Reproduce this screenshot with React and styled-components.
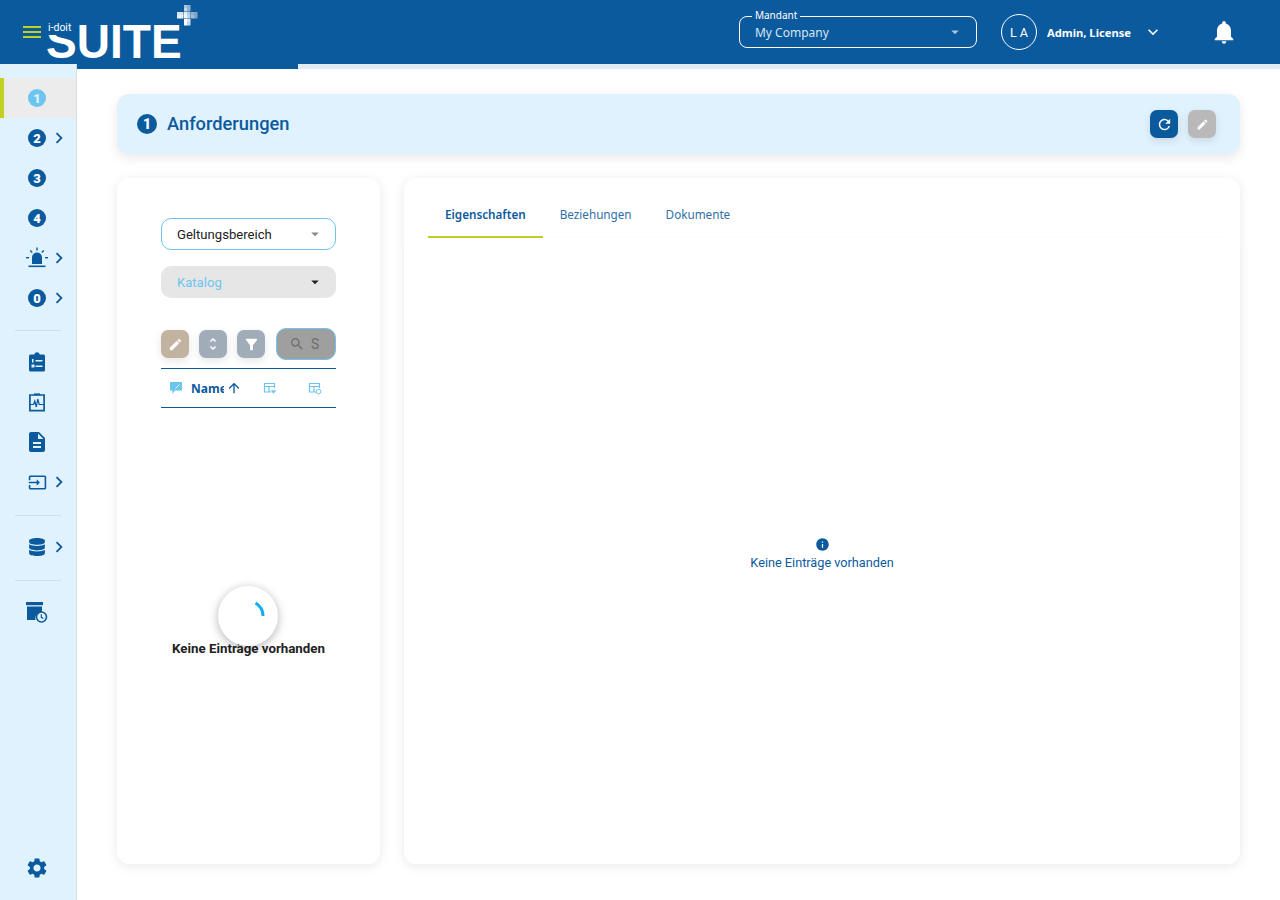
import React from "react";
import styled, { createGlobalStyle } from "styled-components";
import {
  MdMenu,
  MdKeyboardArrowRight,
  MdKeyboardArrowDown,
  MdNotifications,
  MdRefresh,
  MdEdit,
  MdUnfoldMore,
  MdFilterAlt,
  MdSearch,
  MdInfo,
  MdSettings,
  MdDescription,
  MdInput,
  MdArrowUpward,
  MdArrowDropDown,
} from "react-icons/md";
import { FaDatabase } from "react-icons/fa";

const BLUE = "#0b5a9e";
const LIGHT = "#e0f2fe";
const LIME = "#c0d025";
const SKY = "#6cc5ef";
const TITLE_FONT = `"Noto Sans", "Open Sans", sans-serif`;
const BODY_FONT = `Roboto, "Liberation Sans", sans-serif`;

const GlobalStyle = createGlobalStyle`
  html, body {
    margin: 0;
    padding: 0;
    background: #fff;
    font-family: ${BODY_FONT};
  }
  * { box-sizing: border-box; }
`;

const Page = styled.div`
  width: 100%;
  height: 100vh;
  display: flex;
  flex-direction: column;
  overflow: hidden;
`;

const Header = styled.header`
  height: 64px;
  flex: none;
  background: ${BLUE};
  display: flex;
  align-items: center;
  color: #fff;
`;

const MenuButton = styled.div`
  width: 48px;
  display: flex;
  justify-content: flex-end;
  padding-right: 4px;
  color: ${LIME};
  font-size: 24px;
  line-height: 0;
  margin-top: -1px;
`;

const Logo = styled.div`
  position: relative;
  width: 150px;
  height: 64px;
`;

const LogoBig = styled.span`
  position: absolute;
  left: -2px;
  top: 13px;
  font: 700 49px/56px "Liberation Sans", sans-serif;
  color: #fff;
  transform: scaleX(0.94);
  transform-origin: left center;
`;

/* sits over the top of the S, like the real logo */
const LogoSmall = styled.span`
  position: absolute;
  left: 0;
  top: 21px;
  width: 30px;
  height: 14px;
  background: ${BLUE};
  font: 400 10.5px/14px ${BODY_FONT};
  color: #fff;
`;

const LogoPlus = styled.svg`
  position: absolute;
  left: 129px;
  top: 5px;
`;

const HeaderRight = styled.div`
  margin-left: auto;
  display: flex;
  align-items: center;
`;

const Fieldset = styled.div`
  position: relative;
  width: 238px;
  height: 32px;
  border: 1px solid #fff;
  border-radius: 8px;
  display: flex;
  align-items: center;
  justify-content: space-between;
  padding: 0 12px 0 15px;
  font: 400 12px ${TITLE_FONT};
  color: #d5e6f3;
`;

const FieldsetLabel = styled.span`
  position: absolute;
  left: 12px;
  top: -8px;
  padding: 0 3px;
  background: ${BLUE};
  font: 400 10px/13px ${TITLE_FONT};
  color: #fff;
`;

const Caret = styled.span`
  display: flex;
  font-size: 18px;
  color: ${(p) => p.$color || "#888"};
`;

const Avatar = styled.div`
  margin-left: 24px;
  width: 36px;
  height: 36px;
  border: 1px solid #fff;
  border-radius: 50%;
  display: flex;
  align-items: center;
  justify-content: center;
  font: 400 12.5px ${BODY_FONT};
`;

const UserName = styled.span`
  margin-left: 10px;
  font: 700 11.2px ${TITLE_FONT};
`;

const UserCaret = styled.span`
  display: flex;
  margin-left: 12px;
  font-size: 20px;
`;

const BellWrap = styled.span`
  display: flex;
  margin: 0 42px 0 47px;
  font-size: 28px;
`;

const Body = styled.div`
  flex: 1;
  min-height: 0;
  display: flex;
`;

const Sidebar = styled.nav`
  width: 77px;
  flex: none;
  background: ${LIGHT};
  border-right: 1px solid #d5dde3;
  display: flex;
  flex-direction: column;
  padding: 14px 0 12px;
`;

const NavItem = styled.div`
  height: 40px;
  flex: none;
  display: flex;
  align-items: center;
  background: ${(p) => (p.$active ? "#ececec" : "transparent")};
  border-left: ${(p) => (p.$active ? `4px solid ${LIME}` : "none")};
  color: ${BLUE};
  padding-left: ${(p) => (p.$active ? "24px" : "28px")};
  margin-top: ${(p) => (p.$bottom ? "auto" : "0")};
`;

const IconSlot = styled.span`
  width: 18px;
  height: 18px;
  flex: none;
  display: flex;
  align-items: center;
  justify-content: center;
  font-size: ${(p) => p.$size || 22}px;

  svg {
    flex: none;
  }
`;

const NumberBadge = styled.span`
  width: 18px;
  height: 18px;
  flex: none;
  border-radius: 50%;
  background: ${(p) => (p.$active ? SKY : BLUE)};
  color: ${(p) => (p.$active ? "#e0f2fe" : "#fff")};
  display: flex;
  align-items: center;
  justify-content: center;
  font: 900 13px/1 ${BODY_FONT};
`;

const Chevron = styled.span`
  display: flex;
  margin-left: 2px;
  font-size: 22px;
`;

const Divider = styled.div`
  height: 1px;
  flex: none;
  margin: ${(p) => p.$top || 13}px 15px 11px;
  background: #c9e0ef;
`;

const Main = styled.main`
  flex: 1;
  min-width: 0;
  display: flex;
  flex-direction: column;
`;

const Progress = styled.div`
  height: 5px;
  flex: none;
  background: #e0ecf5;
`;

const ProgressFill = styled.div`
  height: 100%;
  background: ${BLUE};
`;

const Content = styled.div`
  flex: 1;
  min-height: 0;
  padding: 25px 40px 36px;
  display: flex;
  flex-direction: column;
  gap: 24px;
`;

const TitleCard = styled.section`
  height: 60px;
  flex: none;
  background: ${LIGHT};
  border-radius: 12px;
  box-shadow: 0 4px 12px rgba(0, 0, 0, 0.09);
  display: flex;
  align-items: center;
  padding: 0 24px 0 20px;
`;

const TitleBadge = styled(NumberBadge)`
  width: 20px;
  height: 20px;
  font-size: 14px;
`;

const Title = styled.h1`
  margin: -2px 0 0 10px;
  font: 500 18.3px ${BODY_FONT};
  color: ${BLUE};
`;

const TitleActions = styled.div`
  margin-left: auto;
  display: flex;
  gap: 10px;
`;

const SquareButton = styled.button`
  width: 28px;
  height: 28px;
  padding: 0;
  border: none;
  border-radius: 7px;
  background: ${(p) => p.$bg};
  color: #fff;
  display: flex;
  align-items: center;
  justify-content: center;
  font-size: ${(p) => p.$size || 16}px;
  box-shadow: 0 3px 8px rgba(0, 0, 0, 0.1);
`;

const Panels = styled.div`
  flex: 1;
  min-height: 0;
  display: flex;
  gap: 24px;
`;

const LeftPanel = styled.section`
  position: relative;
  width: 263px;
  flex: none;
  background: #fff;
  border-radius: 12px;
  box-shadow: 0 2px 12px rgba(0, 0, 0, 0.09);
  padding: 40px 44px 0;
  display: flex;
  flex-direction: column;
`;

const SelectBox = styled.div`
  height: 32px;
  flex: none;
  border-radius: 10px;
  border: ${(p) => (p.$disabled ? "none" : `1px solid ${SKY}`)};
  background: ${(p) => (p.$disabled ? "#e6e6e6" : "#fff")};
  color: ${(p) => (p.$disabled ? SKY : "#222")};
  margin-bottom: 16px;
  padding: ${(p) => (p.$disabled ? "0 12px 0 16px" : "0 11px 0 15px")};
  display: flex;
  align-items: center;
  justify-content: space-between;
  font: 400 13.1px ${BODY_FONT};
`;

const Toolbar = styled.div`
  display: flex;
  align-items: center;
  gap: 10px;
  margin-top: 14px;
  height: 32px;
`;

const SearchBox = styled.div`
  width: 60px;
  height: 32px;
  margin-left: 1px;
  border: 1px solid ${SKY};
  border-radius: 10px;
  background: #9f9f9f;
  display: flex;
  align-items: center;
  padding-left: 12px;
  gap: 6px;
  color: #6e6e6e;
  font: 400 14px ${BODY_FONT};
  overflow: hidden;

  svg {
    flex: none;
  }
`;

const TableHead = styled.div`
  height: 40px;
  margin-top: 8px;
  border-top: 1px solid ${BLUE};
  border-bottom: 1px solid ${BLUE};
  display: grid;
  grid-template-columns: 30px 55px 47px 43px;
  align-items: center;
`;

const HeadIcon = styled.span`
  display: flex;
  justify-content: ${(p) => p.$align || "center"};
  color: ${SKY};
  padding-left: ${(p) => p.$pad || 0}px;
`;

const NameCell = styled.div`
  display: flex;
  align-items: center;
  color: ${BLUE};
  font: 700 12px ${TITLE_FONT};
`;

const NameClip = styled.span`
  width: 33px;
  overflow: hidden;
  white-space: nowrap;
`;

const SortArrow = styled.span`
  display: flex;
  margin-left: 2px;
  font-size: 16px;
`;

const LeftEmpty = styled.div`
  margin-top: 233px;
  margin-left: -10px;
  margin-right: -10px;
  text-align: center;
  white-space: nowrap;
  font: 700 13.3px/16px ${BODY_FONT};
  color: #222;
`;

const SpinnerCircle = styled.div`
  position: absolute;
  left: 101px;
  top: 408px;
  width: 60px;
  height: 60px;
  border-radius: 50%;
  background: #fff;
  box-shadow: 0 2px 10px rgba(0, 0, 0, 0.3);
  display: flex;
  align-items: center;
  justify-content: center;
`;

const RightPanel = styled.section`
  flex: 1;
  min-width: 0;
  background: #fff;
  border-radius: 12px;
  box-shadow: 0 2px 12px rgba(0, 0, 0, 0.09);
  display: flex;
  flex-direction: column;
`;

const Tabs = styled.div`
  height: 60px;
  flex: none;
  padding-left: 24px;
  display: flex;
`;

const Tab = styled.div`
  padding: 16px 17px 2px;
  display: flex;
  align-items: center;
  font: ${(p) => (p.$active ? 600 : 400)} 11.7px ${TITLE_FONT};
  color: ${(p) => (p.$active ? BLUE : "#2e6fa8")};
  border-bottom: 2px solid ${(p) => (p.$active ? LIME : "transparent")};
`;

const TabBody = styled.div`
  flex: 1;
  min-height: 0;
  border-radius: 12px;
  padding-top: 6px;
  box-shadow: 0 -1px 2px rgba(0, 0, 0, 0.015);
  display: flex;
  flex-direction: column;
  align-items: center;
  justify-content: center;
  color: ${BLUE};
  font: 400 12.7px/18px ${BODY_FONT};
`;

const InfoIcon = styled.span`
  display: flex;
  font-size: 15px;
  margin-bottom: 2px;
`;

function Plus() {
  const cells = [
    [7, 0, "#a9c3da"],
    [10, 0, "#8fb0cf"],
    [7, 3, "#c5d7e6"],
    [10, 3, "#8fb0cf"],
    [0, 7, "#d7e3ee"],
    [3, 7, "#d7e3ee"],
    [7, 7, "#e8eff5"],
    [10, 7, "#b6cce0"],
    [14, 7, "#8fb0cf"],
    [17, 7, "#7ea4c6"],
    [0, 10, "#e8eff5"],
    [3, 10, "#e8eff5"],
    [7, 10, "#f2f6f9"],
    [10, 10, "#c5d7e6"],
    [14, 10, "#a0bdd6"],
    [17, 10, "#7ea4c6"],
    [7, 14, "#ffffff"],
    [10, 14, "#d7e3ee"],
    [7, 17, "#ffffff"],
    [10, 17, "#c5d7e6"],
  ];
  return (
    <LogoPlus width="21" height="21" viewBox="0 0 21 21">
      {cells.map(([x, y, c]) => (
        <rect key={`${x}-${y}`} x={x} y={y} width="3.5" height="3.5" fill={c} />
      ))}
    </LogoPlus>
  );
}

const SirenIcon = () => (
  <svg width="22" height="22" viewBox="0 0 22 22" fill="currentColor">
    <path d="M6 17v-6.500a5 5 0 0 1 10 0V17z" />
    <rect x="2.500" y="18.500" width="17" height="1.600" />
    <rect x="10.300" y="0.500" width="1.400" height="3" />
    <rect x="0" y="10" width="3" height="1.400" />
    <rect x="19" y="10" width="3" height="1.400" />
    <path d="M3.700 3.900l1-1 2 2-1 1zM18.300 3.900l-1-1-2 2 1 1z" />
  </svg>
);

const ChecklistIcon = () => (
  <svg width="20" height="20" viewBox="0 0 20 20">
    <path
      fill="currentColor"
      d="M3.500 2.500h3.700a2.900 2.900 0 0 1 5.600 0h3.700a1.500 1.500 0 0 1 1.500 1.500v14a1.500 1.500 0 0 1-1.500 1.500h-13A1.500 1.500 0 0 1 2 18V4a1.500 1.500 0 0 1 1.500-1.500z"
    />
    <g fill={LIGHT}>
      <rect x="5" y="7" width="1.500" height="3.500" />
      <rect x="8.500" y="8" width="7" height="1.500" />
      <rect x="4.500" y="12.500" width="3" height="3" />
      <rect x="8.500" y="13.500" width="7" height="1.500" />
    </g>
  </svg>
);

const PulseIcon = () => (
  <svg width="20" height="20" viewBox="0 0 20 20" fill="none" stroke="currentColor">
    <path strokeWidth="1.700" d="M7 3H2.900v15.600h14.200V3H13" />
    <path strokeWidth="2.400" d="M7 2.600h6" />
    <path strokeWidth="1.200" d="M3 12.500h3.500l1.300-3.500 1.500 6 1.500-8 1.400 5.500H17" />
  </svg>
);

const ArchiveClockIcon = () => (
  <svg width="22" height="22" viewBox="0 0 22 22">
    <rect x="0" y="1" width="17" height="3.200" fill="currentColor" />
    <path fill="currentColor" d="M1 5.500h15v6a6 6 0 0 0-6.500 7.500H1z" />
    <circle cx="15.500" cy="16" r="5" fill={LIGHT} stroke="currentColor" strokeWidth="1.600" />
    <path d="M15.300 13.300v3l2.100 1.200" fill="none" stroke="currentColor" strokeWidth="1.200" />
  </svg>
);

const CommentIcon = () => (
  <svg width="14" height="14" viewBox="0 0 14 14">
    <path fill={SKY} d="M1 1h12v8.500H6L3.500 13V9.500H1z" />
    <path stroke="#fff" strokeWidth="0.900" d="M6.500 7.500l4-4" />
  </svg>
);

const TableAddIcon = ({ round }) => (
  <svg width="14" height="14" viewBox="0 0 14 14" fill="none" stroke={SKY}>
    <path strokeWidth="1.200" d="M8 11H1.500V2.500h10V7M1.500 5.500h10M6 5.500V11" />
    {round ? (
      <circle cx="10.500" cy="10.500" r="2.300" strokeWidth="1" />
    ) : (
      <path d="M8 9.500h5l-2.500 3z" fill={SKY} strokeWidth="0.400" />
    )}
  </svg>
);

const SpinnerArc = () => (
  <svg width="36" height="36" viewBox="0 0 36 36" fill="none">
    <path d="M25.500 5A15 15 0 0 1 33 18" stroke="#12aef0" strokeWidth="3" />
  </svg>
);

const Item = ({ children, chevron, active, bottom, size }) => (
  <NavItem $active={active} $bottom={bottom}>
    <IconSlot $size={size}>{children}</IconSlot>
    {chevron && (
      <Chevron>
        <MdKeyboardArrowRight />
      </Chevron>
    )}
  </NavItem>
);

export default function App() {
  return (
    <Page>
      <GlobalStyle />
      <Header>
        <MenuButton>
          <MdMenu />
        </MenuButton>
        <Logo>
          <LogoBig>SUITE</LogoBig>
          <LogoSmall>i-doit</LogoSmall>
          <Plus />
        </Logo>
        <HeaderRight>
          <Fieldset>
            <FieldsetLabel>Mandant</FieldsetLabel>
            My Company
            <Caret $color="#a9c6de">
              <MdArrowDropDown />
            </Caret>
          </Fieldset>
          <Avatar>L A</Avatar>
          <UserName>Admin, License</UserName>
          <UserCaret>
            <MdKeyboardArrowDown />
          </UserCaret>
          <BellWrap>
            <MdNotifications />
          </BellWrap>
        </HeaderRight>
      </Header>
      <Body>
        <Sidebar>
          <Item active>
            <NumberBadge $active>1</NumberBadge>
          </Item>
          <Item chevron>
            <NumberBadge>2</NumberBadge>
          </Item>
          <Item>
            <NumberBadge>3</NumberBadge>
          </Item>
          <Item>
            <NumberBadge>4</NumberBadge>
          </Item>
          <Item chevron>
            <SirenIcon />
          </Item>
          <Item chevron>
            <NumberBadge>0</NumberBadge>
          </Item>
          <Divider $top={12} />
          <Item>
            <ChecklistIcon />
          </Item>
          <Item>
            <PulseIcon />
          </Item>
          <Item size={24}>
            <MdDescription />
          </Item>
          <Item chevron size={19}>
            <MdInput />
          </Item>
          <Divider />
          <Item chevron size={18}>
            <FaDatabase />
          </Item>
          <Divider />
          <Item>
            <ArchiveClockIcon />
          </Item>
          <Item bottom size={24}>
            <MdSettings />
          </Item>
        </Sidebar>
        <Main>
          <Progress>
            <ProgressFill style={{ width: "221px" }} />
          </Progress>
          <Content>
            <TitleCard>
              <TitleBadge>1</TitleBadge>
              <Title>Anforderungen</Title>
              <TitleActions>
                <SquareButton $bg={BLUE} $size={17}>
                  <MdRefresh />
                </SquareButton>
                <SquareButton $bg="#b9b9b9" $size={13}>
                  <MdEdit />
                </SquareButton>
              </TitleActions>
            </TitleCard>
            <Panels>
              <LeftPanel>
                <SelectBox>
                  Geltungsbereich
                  <Caret>
                    <MdArrowDropDown />
                  </Caret>
                </SelectBox>
                <SelectBox $disabled>
                  Katalog
                  <Caret $color="#222">
                    <MdArrowDropDown />
                  </Caret>
                </SelectBox>
                <Toolbar>
                  <SquareButton $bg="#c2b2a0" $size={15}>
                    <MdEdit />
                  </SquareButton>
                  <SquareButton $bg="#a0adb8" $size={16}>
                    <MdUnfoldMore />
                  </SquareButton>
                  <SquareButton $bg="#a0adb8" $size={17}>
                    <MdFilterAlt />
                  </SquareButton>
                  <SearchBox>
                    <MdSearch size={16} />S
                  </SearchBox>
                </Toolbar>
                <TableHead>
                  <HeadIcon $align="flex-start" $pad={8}>
                    <CommentIcon />
                  </HeadIcon>
                  <NameCell>
                    <NameClip>Name</NameClip>
                    <SortArrow>
                      <MdArrowUpward />
                    </SortArrow>
                  </NameCell>
                  <HeadIcon>
                    <TableAddIcon />
                  </HeadIcon>
                  <HeadIcon>
                    <TableAddIcon round />
                  </HeadIcon>
                </TableHead>
                <LeftEmpty>Keine Einträge vorhanden</LeftEmpty>
                <SpinnerCircle>
                  <SpinnerArc />
                </SpinnerCircle>
              </LeftPanel>
              <RightPanel>
                <Tabs>
                  <Tab $active>Eigenschaften</Tab>
                  <Tab>Beziehungen</Tab>
                  <Tab>Dokumente</Tab>
                </Tabs>
                <TabBody>
                  <InfoIcon>
                    <MdInfo />
                  </InfoIcon>
                  Keine Einträge vorhanden
                </TabBody>
              </RightPanel>
            </Panels>
          </Content>
        </Main>
      </Body>
    </Page>
  );
}
